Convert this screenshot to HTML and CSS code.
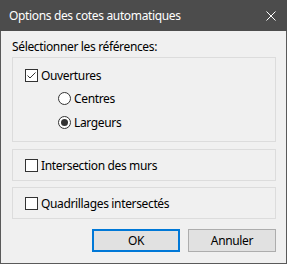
FILE: index.html
```html
<!DOCTYPE html>
<html lang="fr">
<head>
  <meta charset="UTF-8">
  <title>Options des cotes automatiques</title>
  <link rel="stylesheet" href="styles.css">
</head>
<body>
  <div class="window">
    <div class="titlebar">
      <span class="title">Options des cotes automatiques</span>
      <svg class="close" viewBox="0 0 10 10" aria-label="Fermer">
        <path d="M0.5 0.5L9.5 9.5M9.5 0.5L0.5 9.5"/>
      </svg>
    </div>

    <div class="content">
      <div class="label">Sélectionner les références:</div>

      <div class="group group-main">
        <label class="check">
          <span class="box">
            <svg viewBox="0 0 11 11"><path d="M1.5 5.5L4 8L9.5 2.5"/></svg>
          </span>
          Ouvertures
        </label>
        <div class="radios">
          <label class="radio"><span class="circle"></span>Centres</label>
          <label class="radio"><span class="circle on"></span>Largeurs</label>
        </div>
      </div>

      <div class="group group-line">
        <label class="check"><span class="box"></span>Intersection des murs</label>
      </div>

      <div class="group group-line last">
        <label class="check"><span class="box"></span>Quadrillages intersectés</label>
      </div>

      <div class="buttons">
        <button class="button default">OK</button>
        <button class="button">Annuler</button>
      </div>
    </div>
  </div>
</body>
</html>
```

FILE: styles.css
```css
* {
  margin: 0;
  padding: 0;
  box-sizing: border-box;
}

body {
  font-family: 'Noto Sans', 'Open Sans', sans-serif;
  font-size: 12px;
  letter-spacing: -0.35px;
  color: #000;
  background-color: #f0f0f0;
}

.window {
  width: 287px;
  height: 264px;
  background-color: #f0f0f0;
  border: 1px solid #5a5a5a;
  border-top: none;
}

.titlebar {
  height: 31px;
  margin: 0 -1px;
  background-color: #4c4c4c;
  display: flex;
  align-items: center;
  justify-content: space-between;
  padding: 0 11px 0 9px;
}

.title {
  color: #fff;
  font-size: 12px;
  line-height: 16px;
}

.close {
  width: 10px;
  height: 10px;
  stroke: #fff;
  stroke-width: 1;
  fill: none;
}

.content {
  padding: 8px 10px 0 11px;
}

.label {
  line-height: 16px;
  height: 18px;
}

.group {
  border: 1px solid #dcdcdc;
}

.group-main {
  height: 85px;
  padding: 10px 0 0 12px;
  margin-bottom: 7px;
}

.group-line {
  height: 32px;
  padding: 8px 0 0 12px;
  margin-bottom: 6px;
}

.group-line.last {
  margin-bottom: 10px;
}

.check, .radio {
  display: flex;
  align-items: center;
  height: 15px;
  line-height: 15px;
}

.box {
  width: 13px;
  height: 13px;
  border: 1px solid #333;
  background-color: #fff;
  margin-right: 3px;
  display: flex;
  align-items: center;
  justify-content: center;
}

.box svg {
  width: 11px;
  height: 11px;
  fill: none;
  stroke: #333;
  stroke-width: 1;
}

.radios {
  padding: 8px 0 0 33px;
  display: flex;
  flex-direction: column;
  gap: 9px;
}

.circle {
  width: 13px;
  height: 13px;
  border: 1px solid #333;
  border-radius: 50%;
  background-color: #fff;
  margin-right: 3px;
  display: flex;
  align-items: center;
  justify-content: center;
}

.circle.on::after {
  content: '';
  width: 7px;
  height: 7px;
  border-radius: 50%;
  background-color: #333;
}

.buttons {
  display: flex;
  justify-content: flex-end;
  gap: 8px;
}

.button {
  width: 88px;
  height: 23px;
  font-family: inherit;
  font-size: 12px;
  letter-spacing: inherit;
  color: #000;
  background-color: #e1e1e1;
  border: 1px solid #adadad;
}

.button.default {
  border: 2px solid #0078d7;
}
```
